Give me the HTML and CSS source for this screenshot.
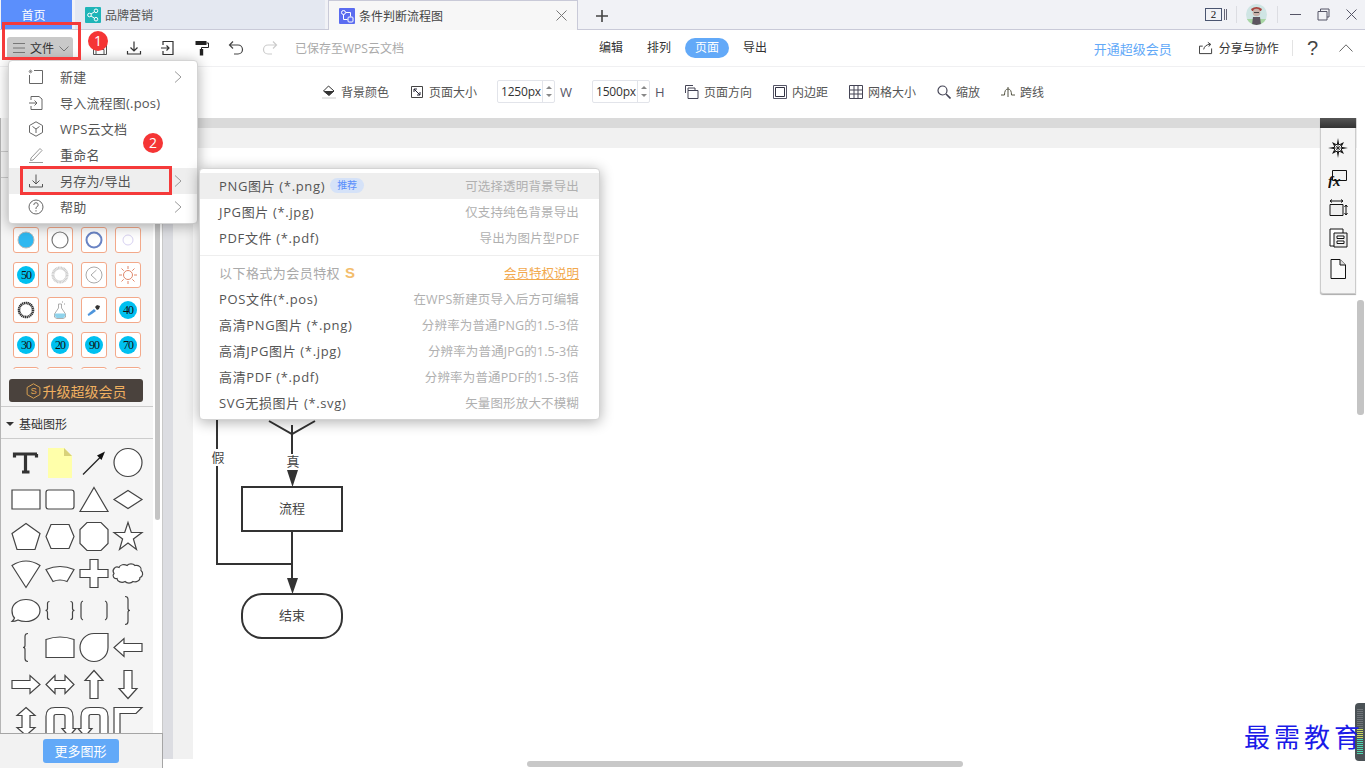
FILE: index.html
```html
<!DOCTYPE html>
<html lang="zh-CN">
<head>
<meta charset="utf-8">
<title>条件判断流程图</title>
<link rel="stylesheet" href="styles.css">
</head>
<body>
<div class="app">
  <header class="titlebar">
    <div class="tab tab-home">首页</div>
    <div class="tab tab-plain">
      <svg class="tab-icon" viewBox="0 0 16 16"><rect width="16" height="16" rx="1" fill="#1fb5b8"/><g fill="none" stroke="#fff" stroke-width="1"><circle cx="4.5" cy="8" r="1.8"/><circle cx="11" cy="3.8" r="1.8"/><circle cx="11" cy="12.2" r="1.8"/><path d="M6 7l3.4-2.2M6 9l3.4 2.2"/></g></svg>
      品牌营销
    </div>
    <div class="tab tab-active">
      <svg class="tab-icon" viewBox="0 0 16 16"><rect width="16" height="16" rx="1" fill="#5b6cf0"/><g fill="none" stroke="#fff" stroke-width="1"><circle cx="4.5" cy="4.5" r="2"/><rect x="9" y="9" width="5" height="5" rx="1"/><path d="M4.5 6.5v5h4M7 4.5h4.500v4"/></g></svg>
      <span class="tab-title">条件判断流程图</span>
      <svg class="tab-close" viewBox="0 0 11 11"><path d="M.5.500l10 10M10.500.500l-10 10" stroke="#777" fill="none"/></svg>
    </div>
    <svg class="tab-add" viewBox="0 0 12 12"><path d="M6 0v12M0 6h12" stroke="#444" stroke-width="1.600" fill="none"/></svg>
    <div class="win-controls">
      <span class="tab-count">2</span>
      <svg class="count-lines" viewBox="0 0 4 12"><path d="M.5 1v11M2.500 1v11" stroke="#667" fill="none"/></svg>
      <i class="win-sep"></i>
      <svg class="avatar" viewBox="0 0 21 21"><defs><clipPath id="av"><circle cx="10.500" cy="10.500" r="10.500"/></clipPath></defs><g clip-path="url(#av)"><rect width="21" height="21" fill="#cfe5e4"/><rect y="15" width="21" height="6" fill="#a9d6a4"/><path d="M5 5q5.500-4 11 0l-1 2H6z" fill="#a8453f"/><circle cx="10.500" cy="8.500" r="3.800" fill="#c9b3ab"/><path d="M6 21l1-8h7l1 8z" fill="#5d5560"/><path d="M8 8h5v1H8z" fill="#444"/></g></svg>
      <i class="win-sep"></i>
      <svg class="win-btn" viewBox="0 0 13 13"><path d="M1 6.500h11" stroke="#556" fill="none"/></svg>
      <svg class="win-btn" viewBox="0 0 13 13"><path d="M3.500 3V1h8.500v8H10M1 3.500h9v8.500H1z" stroke="#556" fill="none"/></svg>
      <svg class="win-btn" viewBox="0 0 13 13"><path d="M1.500 1.500l10 10M11.500 1.500l-10 10" stroke="#556" fill="none"/></svg>
    </div>
  </header>

  <div class="toolbar">
    <div class="tool-left">
      <div class="file-btn">
        <svg class="ico-12" viewBox="0 0 12 10"><path d="M0 .5h12M0 5h12M0 9.500h12" stroke="#777" fill="none"/></svg>
        <span>文件</span>
        <svg class="chev-down" viewBox="0 0 10 6"><path d="M.5.500L5 5 9.500.500" stroke="#777" fill="none"/></svg>
      </div>
      <svg class="tool-ico" viewBox="0 0 16 16"><path d="M1.500 1.500h13v13h-13zM4 1.500v4h8v-4M4 14.500v-5h8v5" stroke="#555" fill="none"/></svg>
      <svg class="tool-ico" viewBox="0 0 16 16"><path d="M8 1.500v9M4.500 7.500L8 11l3.500-3.500M1.500 11v3h13v-3" stroke="#333" stroke-width="1.200" fill="none"/></svg>
      <svg class="tool-ico" viewBox="0 0 16 16"><path d="M3 5V1.500h10v13H3V11M1 8h8M6.500 5.500L9 8l-2.500 2.500" stroke="#333" stroke-width="1.200" fill="none"/></svg>
      <svg class="tool-ico" viewBox="0 0 16 16"><path d="M1.500 1h11v4h-11z" fill="#222"/><path d="M12.500 3h2v4.500H7.500V9" stroke="#222" fill="none"/><path d="M5.800 9h3.400v6.500H5.800z" fill="#222"/></svg>
      <svg class="tool-ico" viewBox="0 0 16 16"><path d="M5 1.500L1.500 5 5 8.500M1.500 5H10a4.500 4.500 0 0 1 0 9H6" stroke="#444" stroke-width="1.200" fill="none"/></svg>
      <svg class="tool-ico" viewBox="0 0 16 16"><path d="M11 1.500L14.500 5 11 8.500M14.500 5H6a4.500 4.500 0 0 0 0 9h4" stroke="#ccc" stroke-width="1.200" fill="none"/></svg>
      <span class="saved">已保存至WPS云文档</span>
    </div>
    <nav class="modes">
      <span class="mode">编辑</span>
      <span class="mode">排列</span>
      <span class="mode mode-on">页面</span>
      <span class="mode">导出</span>
    </nav>
    <div class="tool-right">
      <span class="vip">开通超级会员</span>
      <span class="share">
        <svg class="ico-14" viewBox="0 0 15 13"><path d="M4 4.500H.5v8h13V7M5 8q1-5 7-5.500M9.500 .5l3 2-2 2.500" stroke="#333" fill="none"/></svg>
        分享与协作
      </span>
      <i class="tool-sep"></i>
      <span class="help">?</span>
      <svg class="chev-up" viewBox="0 0 14 8"><path d="M.5 7.500L7 .8l6.500 6.700" stroke="#666" fill="none"/></svg>
    </div>
  </div>

  <div class="pagebar">
    <span class="pg-item"><svg class="ico-14" viewBox="0 0 14 14"><path d="M6.500 1L12 6l-5 4.500L1.500 6z" fill="#fff" stroke="#333"/><path d="M1.500 6H12l-5 4.500z" fill="#333"/><path d="M0 13h14" stroke="#ccc"/></svg>背景颜色</span>
    <span class="pg-item"><svg class="ico-14" viewBox="0 0 14 14"><path d="M1.500 1.500h11v11h-11z" fill="none" stroke="#444"/><path d="M4 4l6 6M4 7V4h3M10 7v3H7" fill="none" stroke="#223"/></svg>页面大小</span>
    <div class="num-field"><span class="num-val">1250px</span><span class="num-step"><i class="up"></i><i class="down"></i></span></div>
    <span class="unit">W</span>
    <div class="num-field"><span class="num-val">1500px</span><span class="num-step"><i class="up"></i><i class="down"></i></span></div>
    <span class="unit">H</span>
    <span class="pg-item"><svg class="ico-14" viewBox="0 0 14 14"><path d="M.5 8V.5H8M3 5.500h10v8H3z" fill="none" stroke="#445"/><path d="M3 3h7v2.500H3z" fill="none" stroke="#445"/></svg>页面方向</span>
    <span class="pg-item"><svg class="ico-14" viewBox="0 0 14 14"><path d="M.5.500h13v13H.5z" fill="none" stroke="#556"/><path d="M2.500 2.500h9v9h-9z" fill="none" stroke="#334"/></svg>内边距</span>
    <span class="pg-item"><svg class="ico-14" viewBox="0 0 14 14"><path d="M.5.500h13v13H.5zM.5 5h13M.5 9h13M5 .5v13M9 .5v13" fill="none" stroke="#445"/></svg>网格大小</span>
    <span class="pg-item"><svg class="ico-14" viewBox="0 0 14 14"><circle cx="5.500" cy="5.500" r="4.500" fill="none" stroke="#445" stroke-width="1.200"/><path d="M9 9l4.500 4.500" stroke="#445" stroke-width="1.600"/></svg>缩放</span>
    <span class="pg-item"><svg class="ico-14" viewBox="0 0 14 14"><path d="M0 10h3.500q0-6 3.500-6t3.500 6H14M7 2v10" fill="none" stroke="#554"/></svg>跨线</span>
  </div>

  <div class="workspace">
    <aside class="sidebar">
      <div class="themes">
        <div class="theme-head"></div>
        <div class="theme-sub"></div>
        <div class="theme-grid">
          <span class="cell"><svg viewBox="0 0 18 18"><circle cx="9" cy="9" r="8" fill="#2fb8f0" stroke="#bbb"/></svg></span>
          <span class="cell"><svg viewBox="0 0 18 18"><circle cx="9" cy="9" r="8" fill="none" stroke="#777" stroke-width="1.200"/></svg></span>
          <span class="cell"><svg viewBox="0 0 18 18"><circle cx="9" cy="9" r="7.500" fill="none" stroke="#6a84c4" stroke-width="2"/></svg></span>
          <span class="cell"><svg viewBox="0 0 18 18"><circle cx="9" cy="9" r="5" fill="none" stroke="#d8d2f2"/></svg></span>
          <span class="cell"><b class="num">50</b></span>
          <span class="cell"><svg viewBox="0 0 18 18"><circle cx="9" cy="9" r="7" fill="none" stroke="#ccc" stroke-width="3" stroke-dasharray="1 .4"/></svg></span>
          <span class="cell"><svg viewBox="0 0 18 18"><circle cx="9" cy="9" r="8" fill="none" stroke="#aaa"/><path d="M11.500 4L6 9l5.500 5" fill="none" stroke="#aaa"/></svg></span>
          <span class="cell"><svg viewBox="0 0 18 18"><circle cx="9" cy="9" r="4.500" fill="none" stroke="#e0876a"/><path d="M9 0v3M9 15v3M0 9h3M15 9h3M2.500 2.500l2.200 2.200M13.300 13.300l2.200 2.200M15.500 2.500l-2.200 2.200M4.700 13.300l-2.200 2.200" stroke="#e0876a"/></svg></span>
          <span class="cell"><svg viewBox="0 0 18 18"><circle cx="9" cy="9" r="7" fill="none" stroke="#333" stroke-width="2.600" stroke-dasharray="1.300 .5"/></svg></span>
          <span class="cell"><svg viewBox="0 0 18 18"><path d="M7.500 3h3v4l4 6q1 4-2 4.500h-7q-3-.5-2-4.500l4-6z" fill="#fff" stroke="#999" stroke-width=".8"/><path d="M4 12.500h10l.5 2-2 2.500h-7l-2-2.500z" fill="#8fd3ec"/><path d="M11 1h1M13 3h1" stroke="#999"/></svg></span>
          <span class="cell"><svg viewBox="0 0 18 18"><path d="M10 6l2-2 3 1-1 3-2 1z" fill="#333"/><path d="M4 12l5-4 2 2-4 3-2 1z" fill="#4d95dc"/><path d="M3 14l2-1" stroke="#4d95dc" stroke-width="2"/></svg></span>
          <span class="cell"><b class="num">40</b></span>
          <span class="cell"><b class="num">30</b></span>
          <span class="cell"><b class="num">20</b></span>
          <span class="cell"><b class="num">90</b></span>
          <span class="cell"><b class="num">70</b></span>
          <span class="cell"></span><span class="cell"></span><span class="cell"></span><span class="cell"></span>
        </div>
      </div>
      <div class="upgrade-wrap">
        <div class="upgrade">
          <svg class="ico-16" viewBox="0 0 16 17"><path d="M8 .8l6.800 3.900v7.600L8 16.200 1.200 12.300V4.700z" fill="none" stroke="#e0a552"/><text x="8" y="12" text-anchor="middle" class="coin">S</text></svg>
          升级超级会员
        </div>
      </div>
      <div class="section-head"><i class="caret"></i>基础图形</div>
      <div class="shapes">
        <svg class="shape raw" viewBox="-17 -18.500 34 37"><path d="M-11.500-5V-8.500H11M-11.500-8.500H11M10.500-5V-8.500M-.5-8.500V9M-4 9.500H3.500" fill="none" stroke="#333" stroke-width="3.200"/></svg>
        <svg class="shape raw" viewBox="-17 -18.500 34 37"><path d="M-12-14.500H4l8 8v22h-24z" fill="#ffffaa"/><path d="M4-14.500l8 8H4z" fill="#d8d27a"/></svg>
        <svg class="shape raw" viewBox="-17 -18.500 34 37"><path d="M-11 12L6-5" stroke="#222" stroke-width="1.200" fill="none"/><path d="M11-11L7.500-2.500 3-7z" fill="#111"/></svg>
        <svg class="shape" viewBox="-17 -18.500 34 37"><circle r="14"/></svg>

        <svg class="shape" viewBox="-17 -18.500 34 37"><path d="M-14-9.500h28v19h-28z"/></svg>
        <svg class="shape" viewBox="-17 -18.500 34 37"><rect x="-14" y="-9.500" width="28" height="19" rx="2.500"/></svg>
        <svg class="shape" viewBox="-17 -18.500 34 37"><path d="M0-12l14 24h-28z"/></svg>
        <svg class="shape" viewBox="-17 -18.500 34 37"><path d="M0-9l14 9-14 9-14-9z"/></svg>

        <svg class="shape" viewBox="-17 -18.500 34 37"><path d="M0-13l14 10-5 16h-18l-5-16z"/></svg>
        <svg class="shape" viewBox="-17 -18.500 34 37"><path d="M-9-12H9l5 12-5 12H-9l-5-12z"/></svg>
        <svg class="shape" viewBox="-17 -18.500 34 37"><path d="M-7-14H7l7 7V7l-7 7H-7l-7-7V-7z"/></svg>
        <svg class="shape" viewBox="-17 -18.500 34 37"><path d="M0-14l3.300 10H14L5.400 2.500 8.500 13 0 6.500-8.500 13-5.400 2.500-14-4H-3.300z"/></svg>

        <svg class="shape" viewBox="-17 -18.500 34 37"><path d="M-14-8Q0-17 14-8L0 14z"/></svg>
        <svg class="shape" viewBox="-17 -18.500 34 37"><path d="M-14-4Q0-10 14-4L7 8Q0 5-7 8z"/></svg>
        <svg class="shape" viewBox="-17 -18.500 34 37"><path d="M-4-14H4V-4H14V4H4V14H-4V4H-14V-4H-4z"/></svg>
        <svg class="shape" viewBox="-17 -18.500 34 37"><path d="M-9-6a5 4 0 0 1 8-2a5 4 0 0 1 8 0a5 4 0 0 1 6 5a4 4 0 0 1-1 7a5 4 0 0 1-7 4a5 4 0 0 1-8 0a5 4 0 0 1-8-3a3 3 0 0 1-3-5a4 4 0 0 1 5-6z"/></svg>

        <svg class="shape" viewBox="-17 -18.500 34 37"><path d="M-14 0c0-6 6-11 14-11S14-6 14 0 8 11 0 11c-3 0-6-.500-8-1.500-2 1-4 1.500-6 1.500 1-1 2-2 2.500-3.500C-13.500 5.500-14 3-14 0z"/></svg>
        <svg class="shape" viewBox="-17 -18.500 34 37"><path class="open" d="M-10.500-9q-2 0-2 2V-2q0 2-2 2 2 0 2 2V7q0 2 2 2M10.500-9q2 0 2 2V-2q0 2 2 2-2 0-2 2V7q0 2-2 2"/></svg>
        <svg class="shape" viewBox="-17 -18.500 34 37"><path class="open" d="M-11-9.500q-2 .5-2 3V6.500q0 2.500 2 3M11-9.500q2 .5 2 3V6.500q0 2.500-2 3"/></svg>
        <svg class="shape" viewBox="-17 -18.500 34 37"><path class="open" d="M-3-14q3 0 3 3V-2q0 2 2 2-2 0-2 2V11q0 3-3 3"/></svg>

        <svg class="shape" viewBox="-17 -18.500 34 37"><path class="open" d="M2-14q-3 0-3 3V-2q0 2-2 2 2 0 2 2V11q0 3 3 3"/></svg>
        <svg class="shape" viewBox="-17 -18.500 34 37"><path d="M-14-8Q0-13 14-8V10H-14z"/></svg>
        <svg class="shape" viewBox="-17 -18.500 34 37"><path d="M0-14H14V0A14 14 0 1 1 0-14z"/></svg>
        <svg class="shape" viewBox="-17 -18.500 34 37"><path d="M14-4V4H-4v5l-10-9 10-9v5z"/></svg>

        <svg class="shape" viewBox="-17 -18.500 34 37"><path d="M-14-4V4H4v5l10-9-10-9v5z"/></svg>
        <svg class="shape" viewBox="-17 -18.500 34 37"><path d="M-5-4H5V-9L14 0 5 9V4H-5V9L-14 0-5-9z"/></svg>
        <svg class="shape" viewBox="-17 -18.500 34 37"><path d="M-4 14V-4H-9L0-14 9-4H4V14z"/></svg>
        <svg class="shape" viewBox="-17 -18.500 34 37"><path d="M-4-14V4H-9L0 14 9 4H4V-14z"/></svg>

        <svg class="shape" viewBox="-17 -18.500 34 37"><path d="M0-14L9-6H4V6H9L0 14-9 6H-4V-6H-9z"/></svg>
        <svg class="shape" viewBox="-17 -18.500 34 37"><path d="M-14 18V-5q0-9 9-9H4q9 0 9 9V7h3L9 15 2 7h3V-5q0-2-2-2H-4q-2 0-2 2V18z"/></svg>
        <svg class="shape" viewBox="-17 -18.500 34 37"><path d="M14 18V-5q0-9-9-9H-4q-9 0-9 9V7h-3L-9 15-2 7h-3V-5q0-2 2-2H4q2 0 2 2V18z"/></svg>
        <svg class="shape" viewBox="-17 -18.500 34 37"><path d="M-14 18V-14H14L8-8H-8V18z"/></svg>
      </div>
      <div class="side-scroll"><i></i></div>
      <div class="side-foot"><span class="more">更多图形</span></div>
    </aside>
    <div class="strip"></div>
    <main class="stage">
      <div class="ruler"></div>
      <div class="band"></div>
      <div class="canvas-row">
        <div class="canvas">
          <svg class="diagram" viewBox="193 148 1172 611">
            <g class="edge">
              <path d="M217 400V564H292M292 425V472M292 531V580M242 487h100v44H242z"/>
              <rect x="242" y="594" width="100" height="44" rx="20"/>
              <path d="M269 421l23 13 23-13"/>
            </g>
            <path class="head" d="M287 470h11l-5.500 17zM287 578h11l-5.500 16z"/>
            <rect x="208" y="449" width="20" height="17" fill="#fff"/>
            <rect x="284" y="454" width="18" height="16" fill="#fff"/>
            <text x="218" y="462" class="label">假</text>
            <text x="293" y="466" class="label">真</text>
            <text x="292" y="513" class="node-text">流程</text>
            <text x="292" y="620" class="node-text">结束</text>
          </svg>
        </div>
        <div class="stage-foot"></div>
      </div>
      <div class="right-scroll"><i></i></div>
      <div class="h-scroll"></div>
      <div class="float-panel">
        <div class="float-head"></div>
        <svg class="float-ico" viewBox="0 0 20 20"><path d="M10 0l1.500 8.500L20 10l-8.500 1.500L10 20l-1.500-8.500L0 10l8.500-1.500z" fill="#111"/><path d="M4 4l4 2 -2 2zM16 4l-4 2 2 2zM4 16l4-2-2-2zM16 16l-4-2 2-2z" fill="#111"/><circle cx="10" cy="10" r="4" fill="#fff" stroke="#111"/><path d="M7.500 7.500l5 5M12.500 7.500l-5 5M10 6v8M6 10h8" stroke="#111" stroke-width=".7"/></svg>
        <svg class="float-ico" viewBox="0 0 20 20"><path d="M4.500 2.500h14v10h-14z" fill="#f2f2f2" stroke="#111"/><text x="0" y="18" class="fx">fx</text></svg>
        <svg class="float-ico" viewBox="0 0 20 20"><path d="M2 6.500h13v11H2z" fill="#eee" stroke="#111"/><path d="M2 3h13M2 3l2-1.500M2 3l2 1.500M15 3l-2-1.500M15 3l-2 1.500M18 7v10M18 7l-1.500 2M18 7l1.500 2M18 17l-1.500-2M18 17l1.500-2" stroke="#111" fill="none"/></svg>
        <svg class="float-ico" viewBox="0 0 20 20"><path d="M2 1h13v17H2z" fill="#fff" stroke="#111"/><path d="M6 5h13v14H6z" fill="#eee" stroke="#111"/><path d="M9 8h7v2.500H9zM9 13h7v2.500H9z" fill="#fff" stroke="#111"/></svg>
        <svg class="float-ico" viewBox="0 0 20 20"><path d="M3 .5h9l5.500 5.500v13.500H3z" fill="#fafafa" stroke="#111"/><path d="M12 .5V6h5.500" fill="#ddd" stroke="#111"/></svg>
      </div>
      <div class="meter"><i></i></div>
      <div class="watermark">最需教育</div>
    </main>
  </div>

  <div class="menu file-menu">
    <div class="mi"><svg class="mi-ico" viewBox="0 0 16 16"><path d="M6 1.500h8.500v13h-13V6" fill="none" stroke="#666"/><path d="M2.500.5v4M.5 2.500h4M1 1l3 3M4 1L1 4" stroke="#777" stroke-width=".6" fill="none"/></svg><span>新建</span><svg class="mi-more" viewBox="0 0 8 12"><path d="M1 .5L7 6l-6 5.500" stroke="#999" fill="none"/></svg></div>
    <div class="mi"><svg class="mi-ico" viewBox="0 0 16 16"><path d="M3 5V1.500h8L14 4v10.500H3V11M1 8h8M6.500 5.500L9 8l-2.500 2.500" stroke="#666" fill="none"/></svg><span>导入流程图(.pos)</span></div>
    <div class="mi"><svg class="mi-ico" viewBox="0 0 16 16"><path d="M8 .8l6.500 3.700v7L8 15.200 1.500 11.500v-7zM4.500 5.500L8 8l3.500-2.500M8 8v4" stroke="#666" fill="none"/></svg><span>WPS云文档</span></div>
    <div class="mi"><svg class="mi-ico" viewBox="0 0 16 16"><path d="M3 11L12 1.500l2 2L5 13l-2.500.5zM1 15.500h14" stroke="#999" fill="none"/></svg><span>重命名</span></div>
    <div class="mi mi-on"><svg class="mi-ico" viewBox="0 0 16 16"><path d="M8 1.500v9M4.500 7.500L8 11l3.500-3.500M1.500 11v3h13v-3" stroke="#555" fill="none"/></svg><span>另存为/导出</span><svg class="mi-more" viewBox="0 0 8 12"><path d="M1 .5L7 6l-6 5.500" stroke="#999" fill="none"/></svg></div>
    <div class="mi"><svg class="mi-ico" viewBox="0 0 16 16"><circle cx="8" cy="8" r="7" fill="none" stroke="#666"/><path d="M5.800 6q0-2.300 2.200-2.300T10.200 6Q10.200 7.500 8 8.500v1.500M8 11.200v1.300" stroke="#666" fill="none"/></svg><span>帮助</span><svg class="mi-more" viewBox="0 0 8 12"><path d="M1 .5L7 6l-6 5.500" stroke="#999" fill="none"/></svg></div>
  </div>

  <div class="menu export-menu">
    <div class="xi xi-on"><span class="xi-name">PNG图片 (*.png)<em class="tag">推荐</em></span><span class="xi-desc">可选择透明背景导出</span></div>
    <div class="xi"><span class="xi-name">JPG图片 (*.jpg)</span><span class="xi-desc">仅支持纯色背景导出</span></div>
    <div class="xi"><span class="xi-name">PDF文件 (*.pdf)</span><span class="xi-desc">导出为图片型PDF</span></div>
    <hr class="xi-sep">
    <div class="xi"><span class="xi-name xi-muted">以下格式为会员特权<b class="dollar">S</b></span><span class="xi-link">会员特权说明</span></div>
    <div class="xi"><span class="xi-name">POS文件(*.pos)</span><span class="xi-desc">在WPS新建页导入后方可编辑</span></div>
    <div class="xi"><span class="xi-name">高清PNG图片 (*.png)</span><span class="xi-desc">分辨率为普通PNG的1.5-3倍</span></div>
    <div class="xi"><span class="xi-name">高清JPG图片 (*.jpg)</span><span class="xi-desc">分辨率为普通JPG的1.5-3倍</span></div>
    <div class="xi"><span class="xi-name">高清PDF (*.pdf)</span><span class="xi-desc">分辨率为普通PDF的1.5-3倍</span></div>
    <div class="xi"><span class="xi-name">SVG无损图片 (*.svg)</span><span class="xi-desc">矢量图形放大不模糊</span></div>
  </div>

  <div class="callout callout-file"></div>
  <div class="callout callout-save"></div>
  <div class="step step-1">1</div>
  <div class="step step-2">2</div>
</div>
</body>
</html>
```
FILE: styles.css
```css
* { box-sizing: border-box; }
html, body { margin: 0; padding: 0; }
body {
  font-family: "Open Sans", "Noto Sans CJK SC", sans-serif;
  font-size: 12px;
  color: #444;
  background: #fff;
  overflow: hidden;
}
i, em { font-style: normal; }
svg { display: block; flex: none; }

.app { position: relative; width: 1365px; height: 768px; overflow: hidden; display: flex; flex-direction: column; }

/* title bar */
.titlebar { height: 30px; flex: none; display: flex; align-items: stretch; background: #f1f2f6; border-bottom: 1px solid #c9cad8; }
.tab { display: flex; align-items: center; font-size: 12px; }
.tab-home { width: 71px; margin-left: 1px; padding-right: 6px; justify-content: center; background: #5b8ffc; color: #fff; }
.tab-plain { width: 250px; margin-left: 3px; padding-left: 10px; gap: 4px; background: #e4e8f1; color: #555; }
.tab-active { width: 250px; margin-left: 3px; padding-left: 10px; gap: 4px; background: #f7f7f7; border: 1px solid #c9cad8; border-bottom: 0; color: #444; height: 30px; }
.tab-icon { width: 16px; height: 16px; }
.tab-title { flex: 1; }
.tab-close { width: 11px; height: 11px; margin-right: 10px; }
.tab-add { width: 12px; height: 12px; margin: 10px 0 0 18px; }
.win-controls { margin-left: auto; display: flex; align-items: center; padding-right: 7px; padding-bottom: 1px; }
.tab-count { width: 17px; height: 13px; border: 1px solid #4a5570; font: 11px/11px "Liberation Serif", serif; color: #111; text-align: center; }
.count-lines { width: 4px; height: 12px; margin: 0 0 0 2px; }
.win-sep { width: 1px; height: 17px; background: #dcdde2; margin: 0 9px 0 8px; }
.avatar + .win-sep { margin-left: 10px; }
.avatar { width: 21px; height: 21px; }
.win-btn { width: 13px; height: 13px; margin-left: 15px; }
.win-sep + .win-btn { margin-left: 2px; }

/* main toolbar */
.toolbar { height: 37px; flex: none; display: flex; align-items: center; background: #fff; border-bottom: 1px solid #f0f0f2; }
.tool-left { width: 589px; flex: none; display: flex; align-items: center; padding-left: 7px; }
.file-btn { width: 66px; height: 23px; display: flex; align-items: center; gap: 5px; padding-left: 6px; background: #c9c9c9; border-radius: 3px; color: #333; font-size: 12px; margin-right: 10px; }
.ico-12 { width: 12px; height: 10px; }
.chev-down { width: 10px; height: 6px; margin-top: 2px; }
.tool-ico { width: 16px; height: 16px; margin: 0 9px; }
.saved { color: #aaa; margin-left: 8px; }
.modes { display: flex; gap: 4px; align-items: center; }
.mode { width: 44px; height: 20px; line-height: 20px; text-align: center; color: #333; }
.mode-on { background: #62a9f8; color: #fff; border-radius: 10px; }
.tool-right { margin-left: auto; display: flex; align-items: center; padding-right: 12px; }
.vip { color: #62a9f8; font-size: 13px; margin-right: 27px; }
.share { display: flex; align-items: center; gap: 6px; color: #333; margin-right: 13px; }
.ico-14 { width: 14px; height: 14px; }
.tool-sep { width: 1px; height: 16px; background: #e3e3e3; }
.help { font: 20px/20px "Liberation Sans", sans-serif; color: #444; margin: 0 21px 0 14px; }
.chev-up { width: 14px; height: 8px; }

/* page toolbar */
.pagebar { height: 51px; flex: none; display: flex; align-items: center; padding: 0 0 2px 322px; background: #fff; color: #555; }
.pg-item { display: flex; align-items: center; gap: 5px; margin-right: 21px; }
.pg-item + .num-field { margin-left: -1px; }
.unit + .pg-item { margin-left: -2px; }
.num-field { width: 58px; height: 23px; display: flex; align-items: stretch; border: 1px solid #e2e4ea; border-radius: 2px; color: #333; }
.num-val { flex: 1; line-height: 21px; padding-left: 3px; font-size: 12px; letter-spacing: -.2px; }
.num-step { width: 12px; border-left: 1px solid #e2e4ea; display: flex; flex-direction: column; align-items: center; justify-content: center; gap: 5px; }
.num-step .up { border: 3px solid transparent; border-top: 0; border-bottom: 3px solid #888; }
.num-step .down { border: 3px solid transparent; border-bottom: 0; border-top: 3px solid #888; }
.unit { width: 37px; flex: none; padding-left: 5px; color: #556; font-size: 13px; }

/* workspace */
.workspace { flex: 1; min-height: 0; display: flex; position: relative; }
.sidebar { width: 163px; flex: none; position: relative; background: #f5f5f5; display: flex; flex-direction: column; border-left: 1px solid #b5b5b5; border-right: 1px solid #c9c9c9; }
.themes { height: 251px; flex: none; overflow: hidden; padding: 0 0 0 12px; }
.theme-head { height: 34px; margin-left: -12px; border-bottom: 1px solid #ccc; }
.theme-sub { height: 26px; margin-left: -12px; border-bottom: 1px solid #ccc; }
.theme-grid { display: grid; grid-template-columns: repeat(4, 26px); grid-auto-rows: 26px; gap: 9px 8px; margin-top: 49px; }
.cell { width: 26px; height: 26px; background: #fff; border: 1px solid #f3a98a; border-radius: 3px; display: flex; align-items: center; justify-content: center; }
.cell svg { width: 18px; height: 18px; }
.num { width: 18px; height: 18px; border-radius: 50%; background: #00c0f0; color: #111; font: 12px/18px "Liberation Serif", serif; letter-spacing: -1px; text-align: center; }
.upgrade-wrap { height: 38px; flex: none; padding: 10px 0 0 8px; border-bottom: 1px solid #ccc; }
.upgrade { width: 134px; height: 23px; border-radius: 3px; background: #4a423d; color: #f0b060; font-size: 14px; display: flex; align-items: center; justify-content: center; gap: 2px; }
.ico-16 { width: 15px; height: 16px; }
.coin { font: 10px "Liberation Sans", sans-serif; fill: #e0a552; }
.section-head { height: 32px; flex: none; display: flex; align-items: center; gap: 5px; padding: 2px 0 0 5px; color: #333; border-bottom: 1px solid #ccc; }
.caret { border: 4px solid transparent; border-bottom: 0; border-top: 4px solid #333; }
.shapes { padding: 5px 0 0 8px; display: grid; grid-template-columns: repeat(4, 34px); grid-auto-rows: 37px; flex: none; }
.shape { width: 34px; height: 37px; overflow: visible; }
.shape:not(.raw) > * { fill: #fff; stroke: #444; stroke-width: 1.200; }
.shape:not(.raw) > .open { fill: none; }
.side-scroll { position: absolute; top: 0; bottom: 0; right: 0; width: 9px; background: #fff; border-right: 2px solid #fff; }
.side-scroll i { display: block; margin: 10px 0 0 2px; width: 5px; height: 392px; background: #c4c4c4; border-radius: 0 0 3px 3px; }
.side-foot { position: absolute; left: -1px; bottom: 0; width: 163px; height: 35px; background: #f2f2f2; border-top: 1px solid #a5a5a5; border-right: 1px solid #a5a5a5; display: flex; justify-content: center; align-items: center; padding: 0 1px 0 0; }
.more { width: 76px; height: 24px; line-height: 24px; text-align: center; background: #62a9f8; border-radius: 3px; color: #fff; font-size: 13px; }
.strip { width: 10px; flex: none; height: 641px; background: #dcdde2; }
.stage { flex: 1; min-width: 0; position: relative; display: flex; flex-direction: column; }
.ruler { height: 10px; flex: none; background: #dadada; }
.band { height: 20px; flex: none; background: #f1f1f1; }
.canvas-row { flex: 1; min-height: 0; display: flex; flex-direction: column; }
.canvas { height: 611px; flex: none; background: #fff; border-left: 20px solid #f1f1f1; }
.stage-foot { flex: 1; background: #fff; }
.diagram { width: 1172px; height: 611px; }
.edge { fill: none; stroke: #333; stroke-width: 2; }
.head { fill: #333; }
.label { font: 13px "Noto Sans CJK SC", sans-serif; fill: #444; text-anchor: middle; }
.node-text { font: 13px "Noto Sans CJK SC", sans-serif; fill: #444; text-anchor: middle; }
.right-scroll { position: absolute; right: 0; top: 0; bottom: 0; width: 8px; background: #fff; }
.right-scroll i { display: block; width: 7px; height: 115px; margin-top: 182px; background: #c4c4c4; border-radius: 3px; }
.h-scroll { position: absolute; left: 354px; bottom: 1px; width: 436px; height: 6px; background: #c8c8c8; border-radius: 3px; }
.float-panel { position: absolute; top: 0; left: 1147px; width: 36px; height: 176px; background: #f5f5f5; border: 1px solid #ccc; border-top: 0; border-radius: 0 0 0 3px; box-shadow: 0 1px 1px #aaa; display: flex; flex-direction: column; align-items: center; gap: 10px; }
.float-head { width: 36px; height: 10px; background: linear-gradient(#555, #333); flex: none; }
.float-ico { width: 20px; height: 20px; }
.float-ico:last-child { margin-top: 1px; }
.fx { font: italic bold 15px "Liberation Serif", serif; fill: #111; }
.meter { position: absolute; right: 0; top: 585px; width: 10px; height: 58px; background: #4b5256; border-radius: 4px 0 0 4px; padding: 6px 2px; }
.meter i { display: block; width: 6px; height: 46px; background: repeating-linear-gradient(#0000 0 1px, #4b5256 1px 2px), linear-gradient(#70757a 0 44%, #c8d860 44% 65%, #50d8b0 65%); }
.watermark { position: absolute; left: 1071px; top: 601px; font: 26px/34px "Noto Sans CJK SC", sans-serif; letter-spacing: 4px; color: #1a1ae8; white-space: nowrap; }

/* menus */
.menu { position: absolute; background: #fff; border: 1px solid #d4d4d4; border-radius: 4px; box-shadow: 0 2px 14px rgba(0,0,0,.32); }
.file-menu { left: 8px; top: 60px; width: 190px; height: 164px; padding-top: 3px; }
.mi { height: 26px; display: flex; align-items: center; position: relative; padding: 0 0 2px 19px; font-size: 13px; letter-spacing: .2px; color: #555; }
.mi-on { background: #eeeeee; }
.mi-ico { width: 16px; height: 16px; margin: 2px 16px 0 0; }
.mi-more { width: 8px; height: 12px; position: absolute; right: 15px; top: 7px; }
.export-menu { left: 199px; top: 168px; width: 401px; height: 252px; padding-top: 4px; }
.xi { height: 26px; display: flex; align-items: center; justify-content: space-between; padding: 0 20px 2px 19px; }
.xi-on { background: #eeeeee; }
.xi-name { font-size: 13px; letter-spacing: .65px; color: #555; display: flex; align-items: center; white-space: pre; }
.xi-muted { color: #aaa; letter-spacing: .45px; }
.tag { background: #d5e2f8; color: #5b8ffc; font-size: 10px; letter-spacing: 0; line-height: 15px; height: 15px; padding: 0 7px; border-radius: 8px; margin-left: 5px; }
.dollar { color: #f3bd6c; font: bold 15px "Liberation Sans", sans-serif; margin-left: 5px; }
.xi-desc { color: #b0b0b0; font-size: 12.500px; letter-spacing: .15px; }
.xi-link { color: #f2a94e; font-size: 12.500px; text-decoration: underline; }
.xi-sep { border: 0; height: 1px; background: #eee; margin: 4px 0; }

/* annotations */
.callout { position: absolute; border: 3px solid #f53a3a; }
.callout-file { left: 2px; top: 22px; width: 79px; height: 38px; }
.callout-save { left: 20px; top: 166px; width: 152px; height: 29px; }
.step { position: absolute; width: 20px; height: 20px; border-radius: 50%; background: #f53535; color: #fff; font: 14px/20px "Open Sans", sans-serif; text-align: center; }
.step-1 { left: 88px; top: 31px; }
.step-2 { left: 143px; top: 133px; }
```
